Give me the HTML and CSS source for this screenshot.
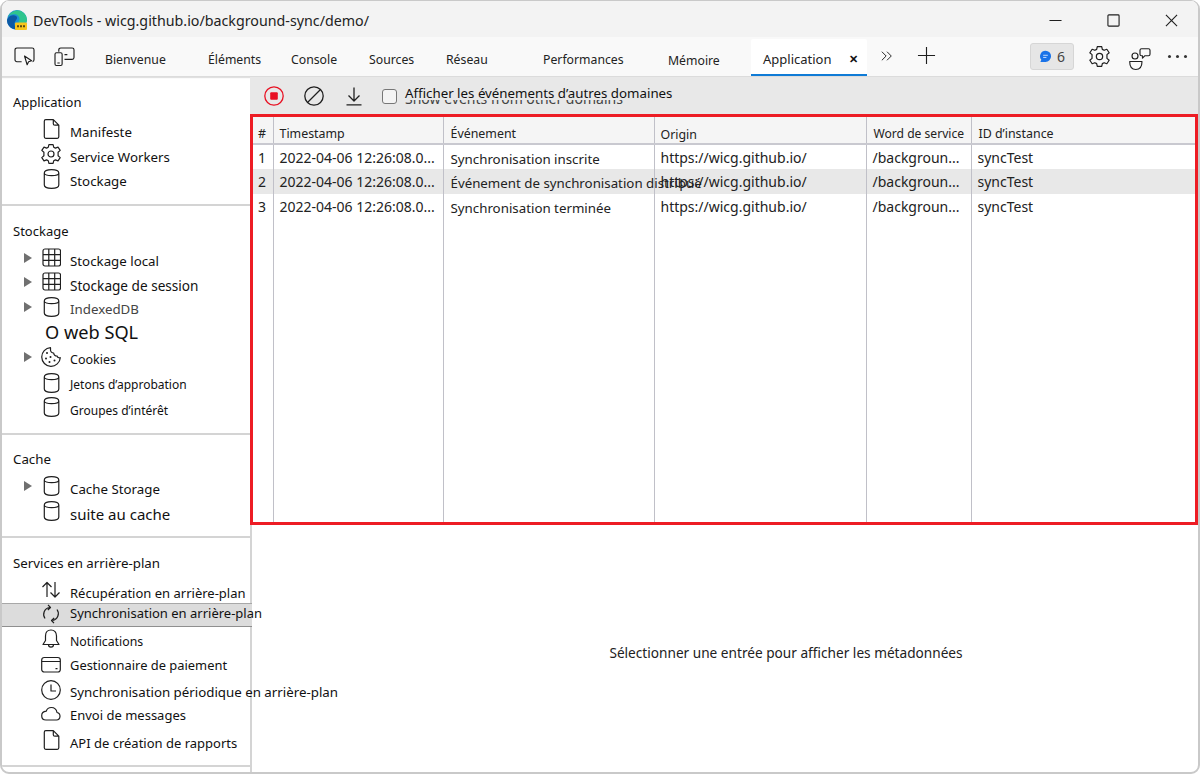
FILE: index.html
```html
<!DOCTYPE html>
<html lang="fr">
<head>
<meta charset="utf-8">
<title>DevTools - wicg.github.io/background-sync/demo/</title>
<link rel="stylesheet" href="styles.css">
</head>
<body>
<svg class="defs" width="0" height="0" aria-hidden="true">
  <symbol id="i-doc" viewBox="0 0 20 20"><path d="M4.800 .7h7.500l5.500 5.500v11.600a1.500 1.500 0 0 1-1.500 1.500H4.800a1.500 1.500 0 0 1-1.500-1.500V2.200a1.500 1.500 0 0 1 1.500-1.500z M12.300 .7v4a1.500 1.500 0 0 0 1.500 1.500h4"/></symbol>
  <symbol id="i-gear" viewBox="0 0 20 20"><path d="M7.900 .6h4.200l.6 2.600 1.700.9 2.600-1 2.200 3.300-2.100 1.800v3.600l2.100 1.800-2.200 3.300-2.600-1-1.700.9-.6 2.600H7.900l-.6-2.600-1.700-.9-2.600 1-2.200-3.300 2.100-1.800V8.200L.8 6.400 3 3.100l2.600 1 1.700-.9z"/><circle cx="10" cy="10" r="3"/></symbol>
  <symbol id="i-cyl" viewBox="0 0 20 20"><path d="M3.300 4c0-4.400 14.500-4.400 14.500 0v12c0 4.400-14.500 4.400-14.500 0z M3.300 4c0 3.600 14.500 3.600 14.500 0"/></symbol>
  <symbol id="i-grid" viewBox="0 0 20 20"><rect x="2" y="1" width="17.500" height="17" rx="2"/><path d="M7.800 1v17M13.700 1v17M2 6.700h17.500M2 12.400h17.500"/></symbol>
  <symbol id="i-cookie" viewBox="0 0 20 20"><path d="M9.500 0.700a9.300 9.300 0 1 0 9.800 10c-1.300.5-2.900-.3-3.200-1.700-1.900.2-3.400-1.100-3.400-3-1.800.1-3.300-1.500-3.200-3.200.1-.8 0-1.500 0-2.100z"/><g class="fill"><circle cx="6" cy="6" r="1"/><circle cx="5" cy="11.500" r="1"/><circle cx="9.500" cy="10" r="1"/><circle cx="8.500" cy="15" r="1"/><circle cx="13.500" cy="13.500" r="1"/></g></symbol>
  <symbol id="i-arrows" viewBox="0 0 20 20"><path d="M6 17V2.500M1.500 7 6 2.500 10.500 7M14 2v15M9.500 12.500 14 17l4.500-4.500"/></symbol>
  <symbol id="i-sync" viewBox="0 0 20 20"><path d="M4 14.500A7 7 0 0 1 8.500 3.500M7 0.800 9.500 3.500 6.800 6M16 5.500A7 7 0 0 1 11.500 16.500M13 19.200l-2.500-2.700 2.700-2.500"/></symbol>
  <symbol id="i-bell" viewBox="0 0 20 20"><path d="M10 1c-3.500 0-5.500 2.500-5.500 6v4.500L2 15.500h16l-2.500-4V7c0-3.500-2-6-5.500-6z M7.500 15.500c0 3.500 5 3.500 5 0"/></symbol>
  <symbol id="i-card" viewBox="0 0 20 20"><rect x="0.700" y="2.500" width="18.600" height="14.500" rx="2.500"/><path d="M0.700 6.500h18.600M14.500 13.700h2"/></symbol>
  <symbol id="i-clock" viewBox="0 0 20 20"><circle cx="10" cy="10" r="9.300"/><path d="M10 4.500V11h5"/></symbol>
  <symbol id="i-cloud" viewBox="0 0 20 20"><path d="M5 16h10.500a3.800 3.800 0 0 0 .5-7.500C15.500 5.500 13 3.500 10.300 3.500 8 3.500 6 5 5.200 7.200 2.600 7.500.700 9.300.700 11.700.700 14.200 2.500 16 5 16z"/></symbol>
</svg>

<div class="window">
  <header class="titlebar">
    <svg class="logo" viewBox="0 0 20 20" aria-hidden="true">
      <circle cx="10" cy="10" r="10" fill="#1b8fd6"/>
      <path d="M1 7C3 1.500 9-.5 13 .8c4 1.300 7 5 7 9.200 0 2-2 3.500-5 3.500-2.500 0-3.500-1-3.500-2 0-1 1-1 1-2.500C12.500 6 9.500 4 6.500 4.300 4 4.500 2 5.500 1 7z" fill="#2fc48d"/>
      <path d="M1 8c2-3 6-3.500 8-2 2 1.500 1 3-.5 5S7 16 10 19c-5 1-10-3-10-9z" fill="#0c59a4"/>
      <rect x="8" y="12.500" width="12" height="7.500" rx="1" fill="#f9c51c"/>
      <path d="M10 16.300h8" stroke="#5a4a10" stroke-width="2" stroke-dasharray="2 1" fill="none"/>
    </svg>
    <span class="title">DevTools - wicg.github.io/background-sync/demo/</span>
    <div class="winctl">
      <svg viewBox="0 0 14 14" aria-hidden="true"><path d="M0.500 7h13"/></svg>
      <svg viewBox="0 0 14 14" aria-hidden="true"><rect x="1" y="1" width="12" height="12" rx="1"/></svg>
      <svg viewBox="0 0 14 14" aria-hidden="true"><path d="M1 1l12 12M13 1 1 13"/></svg>
    </div>
  </header>

  <nav class="tabbar">
    <svg class="tool" viewBox="0 0 22 20" aria-hidden="true"><path d="M8 15.500H3a2 2 0 0 1-2-2V3a2 2 0 0 1 2-2h16a2 2 0 0 1 2 2v10.500a2 2 0 0 1-1.500 2"/><path d="M11 9.500l7.500 5-3.200 1-1.500 3.200z"/></svg>
    <svg class="tool tool-dev" viewBox="0 0 22 20" aria-hidden="true"><path d="M5 5V3a2 2 0 0 1 2-2h12a2 2 0 0 1 2 2v8a2 2 0 0 1-2 2h-8"/><rect x="1" y="6" width="7.500" height="13.500" rx="1.500"/><path d="M3.500 16.800h2.500M11 8h3"/></svg>
    <div class="tabs">
      <span class="tab">Bienvenue</span>
      <span class="tab">Éléments</span>
      <span class="tab">Console</span>
      <span class="tab">Sources</span>
      <span class="tab">Réseau</span>
      <span class="tab">Performances</span>
      <span class="tab tab-low">Mémoire</span>
      <span class="tab tab-active">Application<span class="tab-x">✕</span></span>
    </div>
    <svg class="more" viewBox="0 0 14 12" aria-hidden="true"><path d="M1 1l5 5-5 5M7 1l5 5-5 5"/></svg>
    <svg class="plus" viewBox="0 0 20 20" aria-hidden="true"><path d="M10 1v18M1 10h18"/></svg>
    <div class="tab-right">
      <span class="badge"><svg viewBox="0 0 14 14" aria-hidden="true"><path class="bubble" d="M7 0.800a6 6 0 0 1 0 12H1.500l1-2.200A6 6 0 0 1 7 .8z"/><path class="bubble-l" d="M4.500 5.700h5M4.500 8h3.500"/></svg>6</span>
      <svg class="rt" aria-hidden="true"><use href="#i-gear"/></svg>
      <svg class="rt fb" viewBox="0 0 21 22" aria-hidden="true"><circle cx="6" cy="8" r="3"/><path d="M.7 13.500H13c0 5-2.500 8-6.200 8S.7 18.500.7 13.500z"/><path d="M12.500 .7h7a1.500 1.500 0 0 1 1.500 1.500v4a1.500 1.500 0 0 1-1.500 1.500H16l-2.500 2.500V7.700h-1A1.500 1.500 0 0 1 11 6.200v-4A1.500 1.500 0 0 1 12.500 .7z"/></svg>
      <span class="dots"><i></i><i></i><i></i></span>
    </div>
  </nav>

  <div class="main">
    <aside class="sidebar">
      <section class="sec">
        <h2 class="sec-title">Application</h2>
        <div class="row"><svg class="ic"><use href="#i-doc"/></svg><span class="lbl o3">Manifeste</span></div>
        <div class="row"><svg class="ic"><use href="#i-gear"/></svg><span class="lbl o3">Service Workers</span></div>
        <div class="row"><svg class="ic"><use href="#i-cyl"/></svg><span class="lbl o2">Stockage</span></div>
      </section>
      <section class="sec">
        <h2 class="sec-title">Stockage</h2>
        <div class="row r24"><i class="tri"></i><svg class="ic"><use href="#i-grid"/></svg><span class="lbl o3">Stockage local</span></div>
        <div class="row"><i class="tri"></i><svg class="ic"><use href="#i-grid"/></svg><span class="lbl o4 f136">Stockage de session</span></div>
        <div class="row"><i class="tri"></i><svg class="ic"><use href="#i-cyl"/></svg><span class="lbl o2 gray">IndexedDB</span></div>
        <div class="row"><span class="lbl big sql">O web SQL</span></div>
        <div class="row r26"><i class="tri"></i><svg class="ic"><use href="#i-cookie"/></svg><span class="lbl o2 f125">Cookies</span></div>
        <div class="row r24"><svg class="ic"><use href="#i-cyl"/></svg><span class="lbl o1 small">Jetons d’approbation</span></div>
        <div class="row"><svg class="ic"><use href="#i-cyl"/></svg><span class="lbl o3 small">Groupes d’intérêt</span></div>
      </section>
      <section class="sec">
        <h2 class="sec-title tc">Cache</h2>
        <div class="row"><i class="tri"></i><svg class="ic"><use href="#i-cyl"/></svg><span class="lbl o3">Cache Storage</span></div>
        <div class="row"><svg class="ic"><use href="#i-cyl"/></svg><span class="lbl o3 mid">suite au cache</span></div>
      </section>
      <section class="sec">
        <h2 class="sec-title tc">Services en arrière-plan</h2>
        <div class="row r23"><svg class="ic"><use href="#i-arrows"/></svg><span class="lbl o3 f13">Récupération en arrière-plan</span></div>
        <div class="row selected"><svg class="ic"><use href="#i-sync"/></svg><span class="lbl on1 f13">Synchronisation en arrière-plan</span></div>
        <div class="row r26"><svg class="ic"><use href="#i-bell"/></svg><span class="lbl o2 f123">Notifications</span></div>
        <div class="row"><svg class="ic"><use href="#i-card"/></svg><span class="lbl f129">Gestionnaire de paiement</span></div>
        <div class="row r24"><svg class="ic"><use href="#i-clock"/></svg><span class="lbl o2">Synchronisation périodique en arrière-plan</span></div>
        <div class="row r26"><svg class="ic"><use href="#i-cloud"/></svg><span class="lbl o1 f13">Envoi de messages</span></div>
        <div class="row"><svg class="ic"><use href="#i-doc"/></svg><span class="lbl o3 f13">API de création de rapports</span></div>
      </section>
    </aside>

    <main class="panel">
      <div class="toolbar">
        <svg class="tb" viewBox="0 0 20 20" aria-hidden="true"><circle class="rec" cx="10" cy="10" r="9.200"/><rect class="rec-dot" x="6.200" y="6.200" width="7.600" height="7.600" rx="1"/></svg>
        <svg class="tb" viewBox="0 0 20 20" aria-hidden="true"><circle cx="10" cy="10" r="9.200"/><path d="M3.500 16.500l13-13"/></svg>
        <svg class="tb" viewBox="0 0 20 20" aria-hidden="true"><path d="M10 1.500v13.500M4.500 9.500 10 15l5.500-5.500M2.500 18.800h15"/></svg>
        <span class="check"></span>
        <span class="check-wrap"><span class="ghost">Show events from other domains</span><span class="check-label">Afficher les événements d’autres domaines</span></span>
      </div>
      <div class="redbox">
        <table class="grid">
          <colgroup><col class="c1"><col class="c2"><col class="c3"><col class="c4"><col class="c5"><col></colgroup>
          <thead>
            <tr><th class="num">#</th><th>Timestamp</th><th class="p7">Événement</th><th class="low">Origin</th><th class="narrow p7">Word de service</th><th class="p7">ID d’instance</th></tr>
          </thead>
          <tbody>
            <tr><td class="num">1</td><td>2022-04-06 12:26:08.0...</td><td class="ev p7">Synchronisation inscrite</td><td>https://wicg.github.io/</td><td>/backgroun...</td><td>syncTest</td></tr>
            <tr class="shade"><td class="num">2</td><td>2022-04-06 12:26:08.0...</td><td class="ev p7">Événement de synchronisation distribué</td><td>https://wicg.github.io/</td><td>/backgroun...</td><td>syncTest</td></tr>
            <tr><td class="num">3</td><td>2022-04-06 12:26:08.0...</td><td class="ev p7">Synchronisation terminée</td><td>https://wicg.github.io/</td><td>/backgroun...</td><td>syncTest</td></tr>
            <tr class="filler"><td></td><td></td><td></td><td></td><td></td><td></td></tr>
          </tbody>
        </table>
      </div>
      <div class="meta">Sélectionner une entrée pour afficher les métadonnées</div>
    </main>
  </div>
</div>
</body>
</html>
```

FILE: styles.css
```css
* { box-sizing: border-box; }
html, body { margin: 0; padding: 0; background: #fff; }
body { width: 1200px; height: 774px; overflow: hidden; font-family: "Noto Sans", "Open Sans", sans-serif; font-size: 13.3px; color: #111; }
.defs { display: block; height: 0; }
svg { fill: none; stroke: #1f1f1f; stroke-width: 1.2; stroke-linejoin: round; display: block; overflow: visible; }
symbol .fill { fill: #1f1f1f; stroke: none; }

.window { width: 1200px; height: 774px; border: 2px solid #c9c9c9; border-radius: 9px; border-top-width: 1px; display: flex; flex-direction: column; overflow: hidden; background: #fff; }

.titlebar { height: 36px; flex: none; background: #f3f3f3; display: flex; align-items: center; padding-left: 5px; }
.logo { width: 20px; height: 20px; stroke: none; margin-top: 1px; }
.logo path[stroke] { stroke: #5a4a10; }
.title { margin-left: 6px; font-size: 14.25px; color: #222; margin-top: 2px; }
.winctl { margin-left: auto; display: flex; gap: 45px; padding-right: 20px; margin-top: 2px; }
.winctl svg { width: 13px; height: 13px; stroke-width: 1.2; }

.tabbar { height: 40px; flex: none; background: #f9f9f9; border-bottom: 1px solid #dcdcdc; box-shadow: 0 1px 1px #e0e0e0; display: flex; align-items: center; padding-left: 12px; }
.tool { width: 21px; height: 19px; flex: none; }
.tool-dev { margin-left: 19px; }
.tabs { margin-left: 30px; display: grid; grid-template-columns: 103px 83px 78px 77px 97px 125px 83px 116px; align-self: stretch; align-items: center; }
.tab { font-size: 12.25px; color: #222; padding-top: 5px; white-space: nowrap; }
.tab-low { padding-top: 7px; }
.tab-active { align-self: stretch; margin: 2px 0 0; background: #fff; border-bottom: 2px solid #0f7bd6; padding: 5px 0 0 12px; display: flex; align-items: center; justify-content: space-between; border-radius: 2px 2px 0 0; font-size: 13px; }
.tab-x { font-size: 11px; color: #111; padding-right: 9px; font-weight: 700; margin-top: -2px; }
.more { width: 12px; height: 12px; margin-left: 14px; margin-top: -1px; stroke-width: 1.1; }
.plus { width: 19px; height: 19px; margin-left: 24px; margin-top: -2px; stroke-width: 1.2; }
.tab-right { margin-left: auto; display: flex; align-items: center; padding-right: 11px; }
.badge { width: 44px; height: 27px; background: #e6e6e6; border: 1px solid #d6d6d6; border-radius: 3px; display: flex; align-items: center; justify-content: center; gap: 5px; font-size: 14px; color: #444; }
.badge svg { width: 13px; height: 13px; }
.bubble { fill: #1a73e8; stroke: none; }
.bubble-l { stroke: #cfe2ff; stroke-width: 1; }
.rt { width: 21px; height: 21px; margin-left: 15px; stroke-width: 1.15; }
.rt.fb { margin-left: 19px; height: 22px; margin-top: 4px; }
.dots { display: flex; gap: 5px; margin-left: 18px; }
.dots i { width: 3px; height: 3px; border-radius: 50%; background: #333; }

.main { flex: 1; display: flex; min-height: 0; }

.sidebar { width: 248px; flex: none; display: flex; flex-direction: column; }
.sec { border-bottom: 2px solid #d4d4d4; padding-bottom: 10px; flex: none; }
.sec:first-child { padding-top: 15px; }
.sec + .sec { padding-top: 15px; }
.sec:nth-child(3) { padding-top: 14px; }
.sec:nth-child(2) { padding-bottom: 11px; }
.sec-title { margin: 0 0 7px 11px; font-size: 13px; font-weight: 400; line-height: 20px; height: 20px; color: #111; }
.sec-title.tc { font-size: 13.3px; }

.row { height: 25px; display: flex; align-items: flex-start; padding-left: 39px; position: relative; white-space: nowrap; }
.r23 { height: 23px; }
.r24 { height: 24px; }
.r26 { height: 26px; }
.ic { width: 20px; height: 20px; flex: none; }
.tri { position: absolute; left: 22px; top: 5px; width: 0; height: 0; border-left: 8px solid #707070; border-top: 5px solid transparent; border-bottom: 5px solid transparent; }
.lbl { margin-left: 9px; line-height: 20px; color: #111; }
.o1 { margin-top: 1px; }
.o2 { margin-top: 2px; }
.o3 { margin-top: 3px; }
.o4 { margin-top: 4px; }
.on1 { margin-top: -1px; }
.gray { color: #444; }
.small { font-size: 12px; line-height: 22px; }
.f123 { font-size: 12.3px; line-height: 22px; }
.f125 { font-size: 12.5px; line-height: 22px; }
.f129 { font-size: 12.9px; }
.f13 { font-size: 13px; }
.f136 { font-size: 13.6px; }
.mid { font-size: 15px; }
.big { font-size: 18.2px; }
.sql { margin: 0 0 0 4px; color: #111; }
.selected { height: 24px; background: #dcdcdc; border-top: 1px solid #a8a8a8; border-bottom: 1px solid #8f8f8f; margin-bottom: 2px; margin-right: -2px; }

.panel { flex: 1; min-width: 0; display: flex; flex-direction: column; }
.toolbar { height: 37px; flex: none; background: #e8e8e8; display: flex; align-items: center; padding-left: 14px; }
.tb { width: 20px; height: 20px; margin-right: 20px; stroke-width: 1.3; margin-top: 1px; }
.rec { stroke: #e81123; }
.rec-dot { fill: #e81123; stroke: none; }
.check { width: 15px; height: 15px; background: #f4f4f4; border: 1px solid #777; border-radius: 3px; margin-left: -2px; margin-top: 1px; flex: none; }
.check-wrap { position: relative; margin-left: 8px; margin-top: -5px; line-height: 18px; align-self: center; height: 14px; }
.ghost { position: absolute; left: 0; top: 4px; white-space: nowrap; color: #444; font-size: 14px; }
.check-label { position: relative; display: block; background: #e8e8e8; height: 14px; line-height: 15px; white-space: nowrap; }

.redbox { height: 411px; flex: none; border: 3px solid #ed1c24; background: #fff; }
.grid { width: 100%; height: 100%; border-collapse: collapse; table-layout: fixed; }
.c1 { width: 20px; } .c2 { width: 170px; } .c3 { width: 211px; } .c4 { width: 212px; } .c5 { width: 105px; }
.grid th, .grid td { padding: 1px 0 0 6px; text-align: left; font-weight: 400; white-space: nowrap; border-left: 1px solid #c0c0c8; vertical-align: middle; color: #222; line-height: 20px; font-size: 14px; }
.grid th:first-child, .grid td:first-child { border-left: 0; }
.grid th { height: 26px; padding-top: 8px; line-height: 16px; background: #f5f5f5; border-bottom: 2px solid #c9c9d0; font-size: 12.4px; }
.grid td { height: 25px; }
.grid .num { padding-left: 5px; }
.grid th.low { padding-top: 10px; }
.grid td.ev { padding-top: 3px; font-size: 13.3px; }
.grid .p7 { padding-left: 7px; }
.grid .narrow { font-size: 12.1px; }
.shade td { background: #e8e8e8; }
.filler td { height: auto; }

.meta { flex: 1; border-left: 2px solid #d4d4d4; display: flex; align-items: center; justify-content: center; padding: 8px 0 0 122px; color: #222; font-size: 13.65px; }
```
